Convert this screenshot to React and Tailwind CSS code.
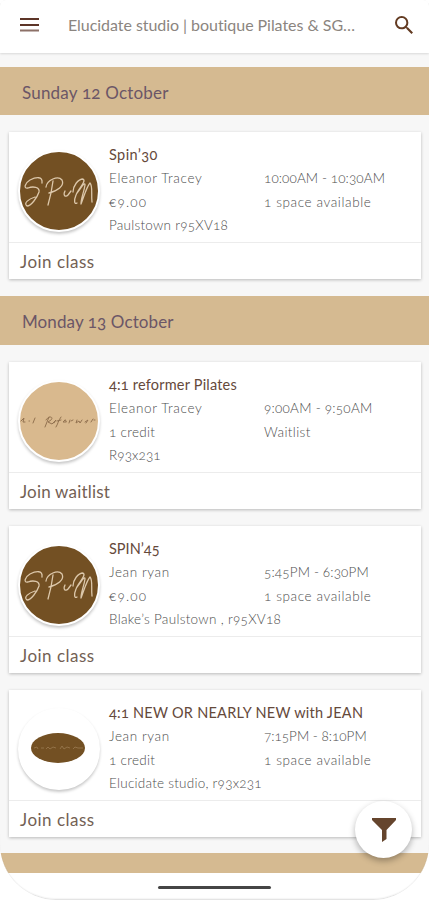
const SpinArt = () => (
  <svg viewBox="0 0 78 78" className="size-[78px]" fill="none" stroke="#dcc7aa" strokeWidth="1.3" strokeLinecap="round" strokeLinejoin="round">
    <path d="M22 31 C23 24 16 25 10 28 C5 31 3 37 8 36 C13 34 20 35 19 40 C17 46 11 54 7 54 C3 51 9 47 15 45" />
    <path d="M33 29 C32 37 30 46 28 53 M26 35 C27 28 38 23 42 28 C45 34 37 39 29 41" />
    <path d="M45 39 C43 43 45 46 48 43 L51 39" />
    <path d="M53 40 C53 34 58 27 63 27 C67 29 58 37 56 43 C54 48 54 53 57 51 M57 41 C61 36 65 29 65 33 C64 40 61 46 61 52 C64 44 67 34 70 31 C73 34 71 42 72 50" />
  </svg>
);

const ReformerArt = () => (
  <svg viewBox="0 0 78 78" className="size-[78px]" fill="none" stroke="#927250" strokeWidth="1" strokeLinecap="round" strokeLinejoin="round">
    <path d="M1 39 L4 36 L3 40 L5 40 M9 39 L9.5 39 M15 36 L13 41" />
    <path d="M29 35 L25 45 M26 38 C29 33 34 35 31 38 L28 40 L32 42 L36 38 L34 41 M41 35 C38 39 38 42 36 45 M37 39 L41 38" />
    <path d="M45 38 L43 40 L46 40 Z M50 38 L49 41 M51 39 L53 38 M57 38 L56 41 L59 39 L60 41 L62 38 M65 40 L68 38 L66 41 M73 37 L71 40 M74 38 L75 38" />
  </svg>
);

const OvalArt = () => (
  <svg viewBox="0 0 78 78" className="size-[78px]" fill="none">
    <ellipse cx="38" cy="38" rx="27" ry="15" fill="#735023" />
    <path d="M14 38 L17 37 L18 39 M21 38 H24 M26 39 L28 37 L30 39 L33 37 L36 38 M40 39 L42 36 L44 39 L47 37 L50 38 M53 39 L55 37 L58 38 L63 38" stroke="#a98a62" strokeWidth="0.6" />
  </svg>
);

const ART = {
  spin: { bg: "bg-[#735023]", Art: SpinArt },
  reformer: { bg: "bg-[#d9b98e]", Art: ReformerArt },
  oval: { bg: "bg-white", Art: OvalArt },
};

const DayBanner = ({ label, tracking, height }) => (
  <div className={`flex shrink-0 items-center bg-[#d5ba91] pt-[3px] pl-[22px] text-[17px] text-[#6b5667] ${height}`}>
    <span className={tracking}>{label}</span>
  </div>
);

const ClassCard = ({ art, title, teacher, price, place, time, status, action }) => {
  const { bg, Art } = ART[art];
  return (
    <article className="mx-[9px] mr-2 h-[147px] shrink-0 bg-white shadow-[0_1px_3px_rgba(0,0,0,0.25)]">
      <div className="flex h-[111px] border-b border-[#ececec] pl-[9px]">
        <div className={`mt-[18px] box-content flex size-[78px] shrink-0 self-start overflow-hidden rounded-full border-2 border-white shadow-[0_2px_3px_rgba(0,0,0,0.22)] ${bg}`}>
          <Art />
        </div>
        <div className="ml-[9px] flex-1 pt-[11px] text-[13.5px] leading-[23.4px] font-light whitespace-nowrap text-[#4e4e4e]">
          <h3 className={`h-[24.4px] text-[14.5px] leading-6 font-normal text-[#65493b] ${title[1]}`}>{title[0]}</h3>
          <div className="grid grid-cols-[155px_1fr]">
            <span className={teacher[1]}>{teacher[0]}</span>
            <span className={time[1]}>{time[0]}</span>
            <span className={price[1]}>{price[0]}</span>
            <span className={status[1]}>{status[0]}</span>
          </div>
          <p className={place[1]}>{place[0]}</p>
        </div>
      </div>
      <div className="flex h-9 items-center pt-px pl-[11px] text-[17px] text-[#735f54]">
        <span className={action[1]}>{action[0]}</span>
      </div>
    </article>
  );
};

const CLASSES = [
  {
    art: "spin",
    title: ["Spin’30", "tracking-[0.4px]"],
    teacher: ["Eleanor Tracey", "tracking-[0.65px]"],
    price: ["€9.00", "tracking-[1.2px]"],
    place: ["Paulstown r95XV18", "tracking-[0.25px]"],
    time: ["10:00AM - 10:30AM", "tracking-[0.1px]"],
    status: ["1 space available", "tracking-[0.6px]"],
    action: ["Join class", "tracking-[0.5px]"],
  },
  {
    art: "reformer",
    title: ["4:1 reformer Pilates", "tracking-[0.2px]"],
    teacher: ["Eleanor Tracey", "tracking-[0.65px]"],
    price: ["1 credit", "tracking-[0.3px]"],
    place: ["R93x231", "tracking-[0.1px]"],
    time: ["9:00AM - 9:50AM", "tracking-[0.25px]"],
    status: ["Waitlist", "tracking-[0.4px]"],
    action: ["Join waitlist", "tracking-[0.2px]"],
  },
  {
    art: "spin",
    title: ["SPIN’45", "tracking-[0px]"],
    teacher: ["Jean ryan", "tracking-[0.6px]"],
    price: ["€9.00", "tracking-[1.2px]"],
    place: ["Blake’s Paulstown , r95XV18", "tracking-[0.3px]"],
    time: ["5:45PM - 6:30PM", "tracking-[0.15px]"],
    status: ["1 space available", "tracking-[0.6px]"],
    action: ["Join class", "tracking-[0.5px]"],
  },
  {
    art: "oval",
    title: ["4:1 NEW OR NEARLY NEW with JEAN", "tracking-[0.25px]"],
    teacher: ["Jean ryan", "tracking-[0.6px]"],
    price: ["1 credit", "tracking-[0.3px]"],
    place: ["Elucidate studio, r93x231", "tracking-[0.25px]"],
    time: ["7:15PM - 8:10PM", "tracking-[0px]"],
    status: ["1 space available", "tracking-[0.6px]"],
    action: ["Join class", "tracking-[0.5px]"],
  },
];

export default function App() {
  return (
    <div className="h-[900px] w-[429px] bg-white">
      <div className="relative flex h-[900px] flex-col overflow-hidden rounded-t-md rounded-b-[56px] bg-[#f7f7f7] font-['Lato',sans-serif] [font-feature-settings:'onum'_1,'calt'_0,'case'_0]">
        <header className="flex h-[53px] shrink-0 items-center bg-white pl-5 shadow-[0_1px_2px_rgba(0,0,0,0.12)]">
          <svg viewBox="0 0 20 14" className="-mt-1 h-[14px] w-5" fill="#5d3528">
            <path d="M0 0H19V2H0Z M0 6H19V8H0Z" />
            <path d="M0 11.5H19V13.5H0Z" opacity=".7" />
          </svg>
          <h1 className="-mt-[3px] ml-7 w-[292px] text-base whitespace-nowrap text-[#8b8580]">
            <span className="tracking-[-0.05px]">Elucidate studio | boutique Pilates &amp; SG…</span>
          </h1>
          <svg viewBox="3 3 17.5 17.5" className="-mt-1 ml-[35px] size-[18px]" fill="#633b22">
            <path d="M15.5 14h-.79l-.28-.27A6.471 6.471 0 0 0 16 9.5 6.5 6.5 0 1 0 9.5 16c1.61 0 3.09-.59 4.23-1.57l.27.28v.79l5 4.99L20.49 19l-4.99-5zm-6 0C7.01 14 5 11.99 5 9.5S7.01 5 9.5 5 14 7.01 14 9.5 11.99 14 9.5 14z" />
          </svg>
        </header>
        <main className="flex h-[820px] shrink-0 flex-col gap-[17px] overflow-hidden pt-[14px]">
          <DayBanner label="Sunday 12 October" tracking="tracking-[0.2px]" height="h-12" />
          <ClassCard {...CLASSES[0]} />
          <DayBanner label="Monday 13 October" tracking="tracking-[0.1px]" height="h-[49px]" />
          <ClassCard {...CLASSES[1]} />
          <ClassCard {...CLASSES[2]} />
          <ClassCard {...CLASSES[3]} />
          <div className="-mt-px h-12 shrink-0 bg-[#d5ba91]" />
        </main>
        <footer className="flex flex-1 justify-center bg-white pt-[13px]">
          <div className="h-[3px] w-[113px] rounded-full bg-[#454545]" />
        </footer>
        <div className="pointer-events-none absolute inset-x-0 bottom-0 h-[66px] rounded-b-[56px] border-b border-[#e4e4e4] shadow-[inset_0_-1px_1px_rgba(0,0,0,0.04)]" />
        <button className="absolute top-[801px] left-[355px] flex size-[57px] items-center justify-center rounded-full bg-white shadow-[0_3px_6px_rgba(0,0,0,0.3)]">
          <svg viewBox="0 0 26 26" className="size-[26px]" fill="#65452d">
            <path d="M1 1H25V3L15.5 13V22L11 25V13L1 3Z" />
          </svg>
        </button>
      </div>
    </div>
  );
}
